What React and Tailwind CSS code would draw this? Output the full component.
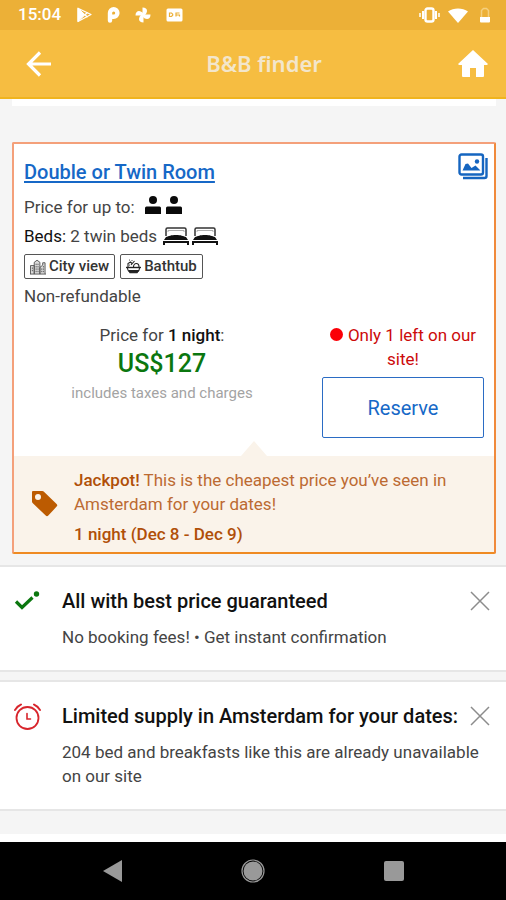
// --- ICONS ---
const PlayIcon = () => (
  <svg width="15" height="16" viewBox="0 0 15 16" fill="none" stroke="#fff" strokeLinejoin="round">
    <path d="M1 1.2 14 7.5 1 14.5Z" strokeWidth="1.2" />
    <path d="M1 1.2 8 7.8 1 14.5Z" fill="#fff" />
    <path d="M8 7.8 10.5 5.5M8 7.8l2.5 2.4" strokeWidth="1.4" />
  </svg>
)

const ParkingIcon = () => (
  <svg width="13" height="16" viewBox="0 0 13 16" fill="none">
    <path d="M3 13.5V6a3.7 3.7 0 1 1 3.7 3.7H5.5" stroke="#fff" strokeWidth="4.4" strokeLinecap="round" strokeLinejoin="round" />
    <circle cx="6.7" cy="6" r="1.1" fill="#ecb037" />
  </svg>
)

const PinwheelIcon = () => (
  <svg width="16" height="16" viewBox="0 0 16 16" fill="#fff">
    <path d="M7.5 8V.5c3 0 4.5 1.5 4.5 3.5 0 1.5-1 3-2 4Z" />
    <path d="M8 7.5h7.5c0 3-1.5 4.5-3.5 4.5-1.5 0-3-1-4-2Z" />
    <path d="M8.5 8v7.5c-3 0-4.5-1.5-4.5-3.5 0-1.5 1-3 2-4Z" />
    <path d="M8 8.5H.5c0-3 1.5-4.5 3.5-4.5 1.5 0 3 1 4 2Z" />
  </svg>
)

const CardIcon = () => (
  <svg width="17" height="14" viewBox="0 0 17 14">
    <rect x=".5" y=".5" width="16" height="13" rx="1.5" fill="#fff" />
    <g fill="none" stroke="#ecb037" strokeWidth="1.2">
      <path d="M3.5 5h2l1.2 1.2v1L5.5 8.500h-2Z" />
      <path d="M10 8.500V5h3.500M10 7h3.500v1.500" />
    </g>
  </svg>
)

const VibrateIcon = () => (
  <svg width="21" height="16" viewBox="0 0 21 16" fill="none" stroke="#fff">
    <rect x="6.5" y="1.5" width="8" height="13" rx="2" strokeWidth="2.4" />
    <path d="M4 4v8M17 4v8" strokeWidth="2" />
    <path d="M1 6v4M20 6v4" strokeWidth="1.5" />
  </svg>
)

const WifiIcon = () => (
  <svg width="20" height="15" viewBox="0 0 20 15" fill="#fff">
    <path d="M0 3.5C5.5-.6 14.5-.6 20 3.5L10 15Z" />
  </svg>
)

const BatteryIcon = () => (
  <svg width="10" height="16" viewBox="0 0 10 16">
    <path d="M1.5 11V3.5l2-2h3l2 2V11" fill="none" stroke="#f5cf7d" strokeWidth="1.5" />
    <path d="M0 10h10v4.500a1 1 0 0 1-1 1H1a1 1 0 0 1-1-1Z" fill="#fff" />
  </svg>
)

const BackIcon = () => (
  <svg width="26" height="26" viewBox="0 0 26 26" fill="none" stroke="#fff" strokeWidth="3.2">
    <path d="M25 13H3M14 1.5 2.5 13 14 24.5" />
  </svg>
)

const HomeIcon = () => (
  <svg width="30" height="27" viewBox="0 0 30 27" fill="#fff">
    <path d="M15 0 30 14l-1 1h-3v11a1 1 0 0 1-1 1h-7v-9h-6v9H5a1 1 0 0 1-1-1V15H1l-1-1Z" />
  </svg>
)

const GalleryIcon = () => (
  <svg width="30" height="27" viewBox="0 0 30 27" fill="none" stroke="#1565c0" strokeWidth="2.4">
    <rect x="1.5" y="1.5" width="23.5" height="20" rx="2" />
    <path d="M28.5 5v18a2 2 0 0 1-2 2H5" />
    <path d="M4.500 17.500 7.500 11l2.500-.5 3.500 4.500 4-2.500 5 5Z" fill="#1565c0" stroke="none" />
    <circle cx="19" cy="8.5" r="2.2" fill="#1565c0" stroke="none" />
  </svg>
)

const PersonIcon = () => (
  <svg width="16" height="18" viewBox="0 0 16 18" fill="#0a0a0a">
    <circle cx="8" cy="4" r="4" />
    <path d="M0 18v-6a1.5 1.5 0 0 1 1.5-1.5h13A1.5 1.5 0 0 1 16 12v6Z" />
  </svg>
)

const BedIcon = () => (
  <svg width="26" height="18" viewBox="0 0 26 18" fill="none" stroke="#111">
    <path d="M3 9V2.5A1.500 1.500 0 0 1 4.500 1h17A1.500 1.500 0 0 1 23 2.500V9" strokeWidth="1.5" stroke="#333" />
    <path d="M5 5V3.500h16V5" strokeWidth=".8" stroke="#999" />
    <path d="M3 10c3-1 5-2 10-2s7 1 10 2l2 3H1Z" fill="#111" stroke="none" />
    <path d="M0 15h26" strokeWidth="2" />
    <path d="M1 14v4M25 14v4" strokeWidth="2" />
  </svg>
)

const CityIcon = () => (
  <svg width="16" height="16" viewBox="0 0 17 16" fill="#ddd" stroke="#555" strokeWidth="1">
    <path d="M.5 15.5v-9h4v9M4.5 15.5V3L7.5.8 10.5 3v12.5M10.5 15.5v-7l3-2.5V3.5h2.5v12M0 15.5h17" />
    <path d="M2.5 8.5v5M6.5 4.5v9M8.500 4.500v9M12.500 9.500v4M14.200 7v6.500" strokeDasharray="1.5 1" />
  </svg>
)

const BathIcon = () => (
  <svg width="15" height="15" viewBox="0 0 15 15" fill="none" stroke="#222" strokeWidth="1.1">
    <path d="M0 8.5h15" strokeWidth="1.4" />
    <path d="M1.5 9c.3 2.500 1.200 4 3 4h6c1.800 0 2.700-1.500 3-4" />
    <path d="M3 11.5h9.500L11 13.800H4Z" fill="#222" />
    <path d="M2 8V4.5L4.500 3l1.500 1.500M5 6l3.500-4M7.500 8c0-2 1.200-3.500 2.800-3.500S13 6 13 8" />
    <path d="M3.5 1h.01M6 1.5h.01M3.5 6h.01" strokeLinecap="round" />
  </svg>
)

const TagIcon = () => (
  <svg width="27" height="27" viewBox="0 0 27 27" fill="#bc5b01">
    <path fillRule="evenodd" d="M1 2a1 1 0 0 1 1-1h9.300a2 2 0 0 1 1.400.6L25.600 14a1.800 1.800 0 0 1 0 2.600l-8.300 9a1.800 1.800 0 0 1-2.600 0L1.600 13a2 2 0 0 1-.6-1.400ZM7 4a3 3 0 1 0 0 6 3 3 0 0 0 0-6Z" />
  </svg>
)

const CheckIcon = () => (
  <svg width="26" height="20" viewBox="0 0 26 20">
    <path d="M2 10.5 8 16.5 18.5 6.5" fill="none" stroke="#0b770f" strokeWidth="3.2" />
    <circle cx="22.5" cy="3" r="2.7" fill="#0b770f" />
  </svg>
)

const AlarmIcon = () => (
  <svg width="27" height="27" viewBox="0 0 27 27" fill="none" stroke="#d8252c" strokeLinecap="round">
    <circle cx="13.5" cy="15" r="11" strokeWidth="1.8" />
    <path d="M1 7 3.5 3.8 7 1.5M26 7l-2.500-3.200L20 1.500" strokeWidth="2" />
    <path d="M13 10.500v5.500h3.500" strokeWidth="1.6" />
  </svg>
)

const CloseIcon = () => (
  <svg width="20" height="20" viewBox="0 0 20 20" stroke="#8c8c8c" strokeWidth="1.5">
    <path d="M1 1l18 18M19 1 1 19" />
  </svg>
)

const StatusBar = () => (
  <div className="flex h-[30px] items-center justify-between bg-[#ecb037] pr-4 pl-[18px]">
    <div className="flex items-center">
      <span className="w-[59px] text-[17px] font-medium text-white">15:04</span>
      <div className="flex items-center gap-[15px]">
        <PlayIcon />
        <ParkingIcon />
        <PinwheelIcon />
        <CardIcon />
      </div>
    </div>
    <div className="flex items-center gap-2">
      <VibrateIcon />
      <WifiIcon />
      <span className="pl-1"><BatteryIcon /></span>
    </div>
  </div>
)

const Header = () => (
  <header className="flex h-[69px] items-center justify-between border-b-2 border-[#f0b41e] bg-[#f6bd41] pr-[18px] pl-[26px]">
    <button type="button" aria-label="Back"><BackIcon /></button>
    <h1 className="pl-[18px] font-['Noto_Sans','Open_Sans',sans-serif] text-[22px] font-semibold text-[#f3e6cb]">B&amp;B finder</h1>
    <button type="button" aria-label="Home"><HomeIcon /></button>
  </header>
)

const Facility = ({ icon, children }) => (
  <li className="flex h-[25px] items-center gap-[3px] rounded-xs border border-[#555] px-[5px] text-[15px] font-medium text-[#333]">
    {icon}
    {children}
  </li>
)

const RoomCard = () => (
  <article className="mr-[10px] ml-3 rounded-xs border-2 border-[#f4a07a] border-r-[#f08a3c] border-b-[#ef8a22] bg-white">
    <div className="flex items-start justify-between pt-[9px] pr-[6px] pl-[10px]">
      <div className="flex flex-col">
        <a href="#room" className="pt-[5px] text-[20px] leading-7 font-medium text-[#1668c7] underline decoration-2 underline-offset-2">Double or Twin Room</a>
        <p className="flex h-[39px] items-center pt-1">
          Price for up to:
          <span className="flex gap-[5px] pb-[5px] pl-[10px]"><PersonIcon /><PersonIcon /></span>
        </p>
        <p className="flex h-6 items-center">
          <span><span className="text-[#111]">Beds:</span> 2 twin beds</span>
          <span className="flex gap-[3px] pb-[2px] pl-[6px]"><BedIcon /><BedIcon /></span>
        </p>
        <ul className="flex gap-[5px] pt-[5px]">
          <Facility icon={<CityIcon />}>City view</Facility>
          <Facility icon={<BathIcon />}>Bathtub</Facility>
        </ul>
        <p className="pt-[5px] leading-6">Non-refundable</p>
      </div>
      <button type="button" aria-label="Photos"><GalleryIcon /></button>
    </div>

    <div className="flex items-start justify-between px-[10px] pt-[15px]">
      <div className="flex-1 pr-[22px] text-center">
        <p className="leading-6">Price for <strong className="font-medium text-[#111]">1 night</strong>:</p>
        <p className="pt-px text-[25px] leading-8 font-medium text-[#0b770f]">US$127</p>
        <p className="pt-px text-[15px] leading-6 text-[#a3a3a3]">includes taxes and charges</p>
      </div>
      <div className="w-[162px] text-center">
        <p className="leading-6 text-[#cc0a0a]">
          <span className="mr-[5px] inline-block size-[13px] rounded-full bg-[#fb0007]" />
          Only 1 left on our site!
        </p>
        <button type="button" className="mt-[6px] h-[61px] w-full rounded-xs border border-[#2b6cc4] text-[20px] text-[#1668c7]">Reserve</button>
      </div>
    </div>

    <div className="mx-auto mt-[3px] h-[15px] w-[26px] bg-[#faf3ea] [clip-path:polygon(50%_0,100%_100%,0_100%)]" />
    <div className="flex items-center bg-[#faf3ea] pt-3 pb-[6px] pl-[17px] text-[#bc6a32]">
      <span className="w-[43px] shrink-0 pb-2"><TagIcon /></span>
      <div>
        <p className="leading-6"><strong className="font-medium text-[#b04f08]">Jackpot!</strong> This is the cheapest price you’ve seen in Amsterdam for your dates!</p>
        <p className="pt-[6px] leading-6 font-medium text-[#b04f08]">1 night (Dec 8 - Dec 9)</p>
      </div>
    </div>
  </article>
)

const Notice = ({ icon, title, children }) => (
  <section className="flex items-start border-y-2 border-[#e6e6e6] bg-white pt-5 pr-4 pb-[21px] pl-[14px]">
    <span className="flex h-7 w-12 shrink-0 items-center">{icon}</span>
    <div className="flex-1">
      <div className="flex items-center justify-between">
        <h2 className="text-[20px] leading-7 font-medium text-[#111]">{title}</h2>
        <button type="button" aria-label="Close"><CloseIcon /></button>
      </div>
      <p className="-mr-3 pt-[10px] leading-6">{children}</p>
    </div>
  </section>
)

const NavBar = () => (
  <nav className="grid h-[58px] grid-cols-[1fr_56px_1fr] items-center bg-black">
    <button type="button" aria-label="Back" className="justify-self-center">
      <svg width="20" height="22" viewBox="0 0 20 22" fill="#999"><path d="M0 11 19 0v22Z" /></svg>
    </button>
    <button type="button" aria-label="Home" className="justify-self-center">
      <svg width="24" height="24" viewBox="0 0 24 24" fill="#999" stroke="#999">
        <circle cx="12" cy="12" r="9.5" stroke="none" />
        <circle cx="12" cy="12" r="11" fill="none" strokeWidth="1.2" />
      </svg>
    </button>
    <button type="button" aria-label="Recent apps" className="size-5 justify-self-center rounded-xs bg-[#999]" />
  </nav>
)

function App() {
  return (
    <div className="flex min-h-screen flex-col bg-[#f5f5f5] font-[Roboto,sans-serif] text-[17px] text-[#444]">
      <StatusBar />
      <Header />
      <main className="flex flex-1 flex-col">
        <div className="mr-[10px] mb-9 ml-3 h-[7px] bg-white" />
        <RoomCard />
        <div className="mt-[11px] flex flex-col gap-2">
          <Notice icon={<CheckIcon />} title="All with best price guaranteed">
            No booking fees! • Get instant confirmation
          </Notice>
          <Notice icon={<AlarmIcon />} title="Limited supply in Amsterdam for your dates:">
            204 bed and breakfasts like this are already unavailable on our site
          </Notice>
        </div>
        <div className="mt-auto h-2 bg-white" />
      </main>
      <NavBar />
    </div>
  )
}

export default App
